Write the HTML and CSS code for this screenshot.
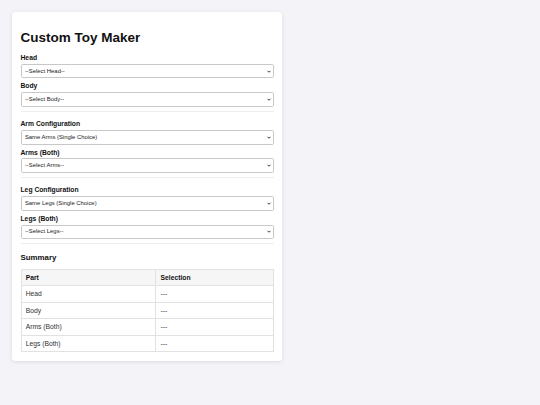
FILE: index.html
```html
<!DOCTYPE html>
<html lang="en">
<head>
<meta charset="utf-8">
<title>Custom Toy Maker</title>
<link rel="stylesheet" href="styles.css">
</head>
<body>
<div class="card">
  <h1 class="title">Custom Toy Maker</h1>

  <div class="section">
    <label class="field-label" for="head">Head</label>
    <div class="select-wrap">
      <select id="head" class="field-select"><option>--Select Head--</option></select>
      <svg class="chev" viewBox="0 0 8 6" aria-hidden="true"><polyline points="1,1.5 4,4.5 7,1.5"/></svg>
    </div>
    <label class="field-label" for="body">Body</label>
    <div class="select-wrap">
      <select id="body" class="field-select"><option>--Select Body--</option></select>
      <svg class="chev" viewBox="0 0 8 6" aria-hidden="true"><polyline points="1,1.5 4,4.5 7,1.5"/></svg>
    </div>
  </div>

  <div class="section">
    <label class="field-label" for="armcfg">Arm Configuration</label>
    <div class="select-wrap">
      <select id="armcfg" class="field-select"><option>Same Arms (Single Choice)</option></select>
      <svg class="chev" viewBox="0 0 8 6" aria-hidden="true"><polyline points="1,1.5 4,4.5 7,1.5"/></svg>
    </div>
    <label class="field-label" for="arms">Arms (Both)</label>
    <div class="select-wrap">
      <select id="arms" class="field-select"><option>--Select Arms--</option></select>
      <svg class="chev" viewBox="0 0 8 6" aria-hidden="true"><polyline points="1,1.5 4,4.5 7,1.5"/></svg>
    </div>
  </div>

  <div class="section">
    <label class="field-label" for="legcfg">Leg Configuration</label>
    <div class="select-wrap">
      <select id="legcfg" class="field-select"><option>Same Legs (Single Choice)</option></select>
      <svg class="chev" viewBox="0 0 8 6" aria-hidden="true"><polyline points="1,1.5 4,4.5 7,1.5"/></svg>
    </div>
    <label class="field-label" for="legs">Legs (Both)</label>
    <div class="select-wrap">
      <select id="legs" class="field-select"><option>--Select Legs--</option></select>
      <svg class="chev" viewBox="0 0 8 6" aria-hidden="true"><polyline points="1,1.5 4,4.5 7,1.5"/></svg>
    </div>
  </div>

  <h3 class="summary-title">Summary</h3>
  <table class="summary">
    <thead>
      <tr><th>Part</th><th>Selection</th></tr>
    </thead>
    <tbody>
      <tr><td>Head</td><td>---</td></tr>
      <tr><td>Body</td><td>---</td></tr>
      <tr><td>Arms (Both)</td><td>---</td></tr>
      <tr><td>Legs (Both)</td><td>---</td></tr>
    </tbody>
  </table>
</div>
</body>
</html>
```

FILE: styles.css
```css
html {
  background: #f4f4f8;
}

body {
  margin: 0;
  padding: 12px;
  font-family: "Liberation Sans", Arial, sans-serif;
  font-size: 6.75px;
  line-height: 7.75px;
  color: #111;
  background: #f4f4f8;
}

.card {
  width: 253px;
  padding: 8.5px;
  background: #fff;
  border-radius: 3.5px;
  box-shadow: 0 1px 4px rgba(0, 0, 0, 0.1);
}

.title {
  font-size: 13.5px;
  line-height: 15.5px;
  margin: 9px 0;
}

.section {
  margin-bottom: 8.3px;
  border-bottom: 1px solid #eee;
}

.field-label {
  display: block;
  font-weight: bold;
  margin-bottom: 2px;
}

.select-wrap {
  position: relative;
  margin-bottom: 4.1px;
}

.field-select {
  display: block;
  width: 100%;
  height: 14.6px;
  box-sizing: border-box;
  padding: 0 3.4px;
  margin: 0;
  font-family: "Liberation Sans", Arial, sans-serif;
  font-size: 5.9px;
  line-height: 7px;
  color: #222;
  background: #fff;
  border: 1px solid #c8c8c8;
  border-radius: 1.7px;
  -webkit-appearance: none;
  appearance: none;
}

.chev {
  position: absolute;
  right: 2.2px;
  top: 50%;
  width: 4px;
  height: 3px;
  margin-top: -1.5px;
  fill: none;
  stroke: #222;
  stroke-width: 1.8;
  pointer-events: none;
}

.summary-title {
  font-size: 7.9px;
  line-height: 9px;
  margin: 7.5px 0 7.4px;
}

.summary {
  width: 100%;
  border-collapse: collapse;
}

.summary th,
.summary td {
  border: 1px solid #e2e2e2;
  padding: 3.85px 4.2px;
  text-align: left;
  line-height: 7.75px;
}

.summary th {
  background: #f6f6f6;
  color: #111;
}

.summary td {
  color: #333;
}
```
